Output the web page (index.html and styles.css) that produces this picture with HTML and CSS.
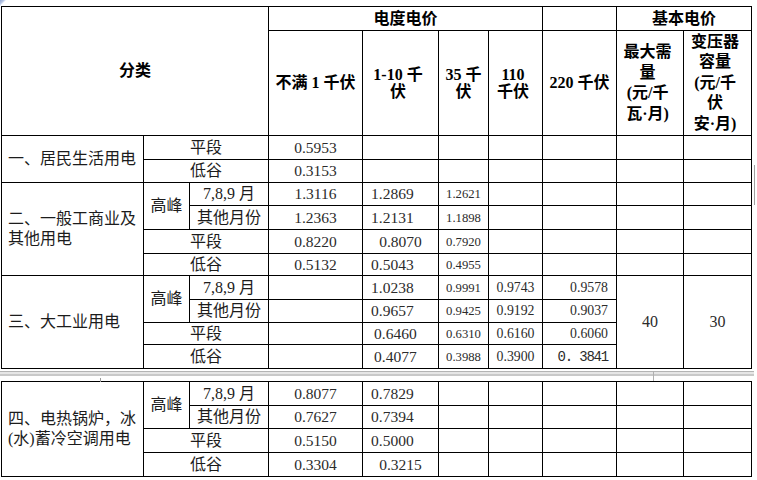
FILE: index.html
```html
<!DOCTYPE html>
<html lang="zh-CN">
<head>
<meta charset="utf-8">
<title>电价表</title>
<link rel="stylesheet" href="styles.css">
</head>
<body>
<div class="page">
  <span class="corner"></span>
  <span class="edge-mark"></span>
  <table class="grid">
    <colgroup>
      <col class="c1"><col class="c2"><col class="c3"><col class="c4"><col class="c5"><col class="c6"><col class="c7"><col class="c8"><col class="c9"><col class="c10">
    </colgroup>
    <thead>
      <tr class="h-top">
        <th colspan="3" rowspan="2" class="hd">分类</th>
        <th colspan="4" class="hd">电度电价</th>
        <th></th>
        <th colspan="2" class="hd">基本电价</th>
      </tr>
      <tr class="h-sub">
        <th class="hd">不满 1 千伏</th>
        <th class="hd tight pr">1-10 千<br>伏</th>
        <th class="hd tight">35 千<br>伏</th>
        <th class="hd tight pr">110<br>千伏</th>
        <th class="hd">220 千伏</th>
        <th class="hd loose pr">最大需<br>量<br>(元/千<br>瓦·月)</th>
        <th class="hd loose pr">变压器<br>容量<br>(元/千<br>伏<br>安·月)</th>
      </tr>
    </thead>
    <tbody>
      <tr class="r24">
        <td rowspan="2" class="lbl">一、居民生活用电</td>
        <td colspan="2" class="sub">平段</td>
        <td class="n">0.5953</td>
        <td></td><td></td><td></td><td></td><td></td><td></td>
      </tr>
      <tr class="r23">
        <td colspan="2" class="sub">低谷</td>
        <td class="n">0.3153</td>
        <td></td><td></td><td></td><td></td><td></td><td></td>
      </tr>
      <tr class="r23">
        <td rowspan="4" class="lbl">二、一般工商业及<br>其他用电</td>
        <td rowspan="2" class="sub">高峰</td>
        <td class="sub">7,8,9 月</td>
        <td class="n">1.3116</td>
        <td class="n l">1.2869</td>
        <td class="s">1.2621</td>
        <td></td><td></td><td></td><td></td>
      </tr>
      <tr class="r24">
        <td class="sub">其他月份</td>
        <td class="n">1.2363</td>
        <td class="n l">1.2131</td>
        <td class="s">1.1898</td>
        <td></td><td></td><td></td><td></td>
      </tr>
      <tr class="r24">
        <td colspan="2" class="sub">平段</td>
        <td class="n">0.8220</td>
        <td class="n">0.8070</td>
        <td class="s">0.7920</td>
        <td></td><td></td><td></td><td></td>
      </tr>
      <tr class="r22">
        <td colspan="2" class="sub">低谷</td>
        <td class="n">0.5132</td>
        <td class="n l">0.5043</td>
        <td class="s">0.4955</td>
        <td></td><td></td><td></td><td></td>
      </tr>
      <tr class="r24">
        <td rowspan="4" class="lbl">三、大工业用电</td>
        <td rowspan="2" class="sub">高峰</td>
        <td class="sub">7,8,9 月</td>
        <td></td>
        <td class="n l">1.0238</td>
        <td class="s">0.9991</td>
        <td class="m">0.9743</td>
        <td class="m r">0.9578</td>
        <td rowspan="4" class="n big">40</td>
        <td rowspan="4" class="n big">30</td>
      </tr>
      <tr class="r23">
        <td class="sub">其他月份</td>
        <td></td>
        <td class="n l">0.9657</td>
        <td class="s">0.9425</td>
        <td class="m">0.9192</td>
        <td class="m r">0.9037</td>
      </tr>
      <tr class="r22">
        <td colspan="2" class="sub">平段</td>
        <td></td>
        <td class="n lm">0.6460</td>
        <td class="s">0.6310</td>
        <td class="m">0.6160</td>
        <td class="m r">0.6060</td>
      </tr>
      <tr class="r24">
        <td colspan="2" class="sub">低谷</td>
        <td></td>
        <td class="n lm">0.4077</td>
        <td class="s">0.3988</td>
        <td class="m">0.3900</td>
        <td class="mono r">0. 3841</td>
      </tr>
    </tbody>
  </table>

  <div class="break">
    <div class="rule"></div>
    <span class="tick tick-a"></span>
    <span class="tick tick-b"></span>
  </div>

  <table class="grid">
    <colgroup>
      <col class="c1"><col class="c2"><col class="c3"><col class="c4"><col class="c5"><col class="c6"><col class="c7"><col class="c8"><col class="c9"><col class="c10">
    </colgroup>
    <tbody>
      <tr class="r24">
        <td rowspan="4" class="lbl">四、电热锅炉，冰<br>(水)蓄冷空调用电</td>
        <td rowspan="2" class="sub">高峰</td>
        <td class="sub">7,8,9 月</td>
        <td class="n">0.8077</td>
        <td class="n l">0.7829</td>
        <td></td><td></td><td></td><td></td><td></td>
      </tr>
      <tr class="r23">
        <td class="sub">其他月份</td>
        <td class="n">0.7627</td>
        <td class="n l">0.7394</td>
        <td></td><td></td><td></td><td></td><td></td>
      </tr>
      <tr class="r24">
        <td colspan="2" class="sub">平段</td>
        <td class="n">0.5150</td>
        <td class="n l">0.5000</td>
        <td></td><td></td><td></td><td></td><td></td>
      </tr>
      <tr class="r24">
        <td colspan="2" class="sub">低谷</td>
        <td class="n">0.3304</td>
        <td class="n">0.3215</td>
        <td></td><td></td><td></td><td></td><td></td>
      </tr>
    </tbody>
  </table>
</div>
</body>
</html>
```

FILE: styles.css
```css
* { box-sizing: border-box; }

html, body {
  margin: 0;
  padding: 0;
  background: #ffffff;
}

body {
  width: 757px;
  height: 480px;
  overflow: hidden;
  font-family: "Liberation Serif", "Noto Sans CJK SC", serif;
  color: #151515;
}

.page {
  position: relative;
  padding: 6px 0 0 1px;
}

.grid {
  border-collapse: collapse;
  table-layout: fixed;
  width: 751px;
}

.c1 { width: 142px; }
.c2 { width: 46px; }
.c3 { width: 79px; }
.c4 { width: 94px; }
.c5 { width: 76px; }
.c6 { width: 50px; }
.c7 { width: 54px; }
.c8 { width: 74px; }
.c9 { width: 67px; }
.c10 { width: 68px; }

.grid th,
.grid td {
  border: 1px solid #000;
  padding: 0;
  text-align: center;
  vertical-align: middle;
  font-size: 16px;
  line-height: 20px;
  font-weight: normal;
  white-space: nowrap;
  overflow: hidden;
}

.h-top { height: 24px; }
.h-sub { height: 105px; }
.r22 { height: 22px; }
.r23 { height: 23px; }
.r24 { height: 24px; }

.grid .hd {
  font-weight: bold;
  color: #000;
}

.grid .tight { line-height: 17px; }
.grid .loose { line-height: 20.5px; }
.grid .pr { padding-right: 5px; }

.grid .lbl {
  text-align: left;
  padding-left: 6px;
  color: #1c1c1c;
}

.grid .sub { color: #1c1c1c; }

.grid .n {
  font-size: 15.5px;
  color: #2b2b2b;
}

.grid .l {
  text-align: left;
  padding-left: 8px;
}

.grid .lm {
  text-align: left;
  padding-left: 11px;
}

.grid .s {
  font-size: 12.7px;
  color: #2b2b2b;
}

.grid .m {
  font-size: 13.8px;
  color: #2b2b2b;
}

.grid .r {
  text-align: right;
  padding-right: 8px;
}

.grid .mono {
  font-family: "Liberation Mono", monospace;
  font-size: 14px;
  letter-spacing: -1.2px;
  color: #2b2b2b;
}

.grid .big { font-size: 16px; }

.break {
  position: relative;
  height: 10px;
  margin-left: -1px;
  width: 754px;
}

.rule {
  margin-top: 2px;
  height: 5px;
  border-top: 1px solid #b4b4b4;
  border-bottom: 2px solid #c9c9c9;
  background: #e6e6e6;
}

.tick {
  position: absolute;
  width: 1px;
  background: #9a9a9a;
}

.tick-a { left: 100px; top: 7px; height: 4px; }
.tick-b { left: 653px; top: 0; height: 10px; background: #b0b0b0; }

.corner {
  position: absolute;
  left: 0;
  top: 0;
  width: 6px;
  height: 6px;
  background: linear-gradient(135deg, #8fa6d2 0%, #b9c8e6 35%, rgba(255,255,255,0) 55%);
}

.edge-mark {
  position: absolute;
  left: 754px;
  top: 165px;
  width: 1px;
  height: 40px;
  background: #a0a0a0;
}
```
